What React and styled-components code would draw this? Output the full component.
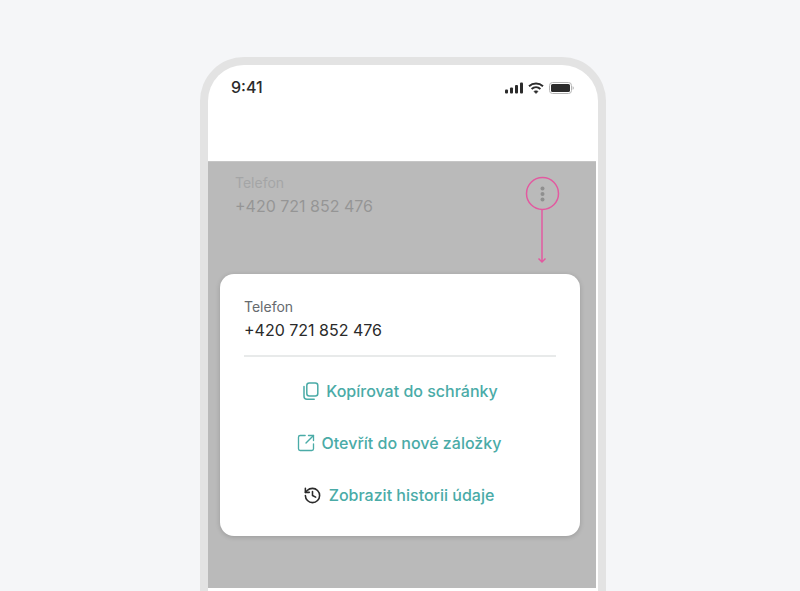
import React from "react";
import styled, { createGlobalStyle } from "styled-components";
import { History, SquareArrowOutUpRight } from "lucide-react";

const GlobalStyle = createGlobalStyle`
  html, body {
    margin: 0;
    height: 100%;
    overflow: hidden;
    background: #f5f6f8;
    font-family: Inter, "Liberation Sans", sans-serif;
  }
`;

const Page = styled.div`
  height: 591px;
  padding: 57px 0 0 200px;
  box-sizing: border-box;
  overflow: hidden;
`;

const Phone = styled.div`
  width: 406px;
  height: 640px;
  box-sizing: border-box;
  border: 8px solid #e3e3e3;
  border-bottom: 0;
  border-radius: 44px 44px 0 0;
  background: #fff;
  overflow: hidden;
`;

const StatusBar = styled.div`
  height: 96px;
  padding: 13px 24px 0 23px;
  box-sizing: border-box;
  display: flex;
  align-items: flex-start;
  justify-content: space-between;
`;

const Time = styled.span`
  font-size: 16px;
  line-height: 19px;
  font-weight: 500;
  color: #2b2b2b;
`;

const StatusIcons = styled.div`
  display: flex;
  align-items: center;
  gap: 5px;
  height: 19px;
`;

const Dimmed = styled.section`
  position: relative;
  width: 388px;
  height: 427px;
  background: #bababa;
  border-top: 1px solid #c6c6c6;
  box-sizing: border-box;
  padding: 12px 0 0 12px;
`;

const FieldRow = styled.div`
  padding-left: 15px;
  height: 100px;
  opacity: ${(p) => p.$faded ? 0.25 : 1};
`;

const Label = styled.div`
  font-size: 14px;
  line-height: 17px;
  color: #666a6e;
`;

const Value = styled.div`
  margin-top: 4px;
  font-size: 16px;
  line-height: 22px;
  color: #2a2a2a;
`;

const Annotation = styled.svg`
  position: absolute;
  left: 316px;
  top: 13px;
`;

const Card = styled.div`
  width: 360px;
  height: 262px;
  box-sizing: border-box;
  padding: 24px 24px 0;
  background: #fff;
  border-radius: 14px;
  box-shadow: 0 1px 5px rgba(0, 0, 0, 0.18);
`;

const Divider = styled.hr`
  margin: 14px 0 8px;
  border: 0;
  height: 2px;
  background: #e8eaea;
`;

const Action = styled.button`
  display: flex;
  align-items: center;
  justify-content: center;
  gap: ${(p) => p.$gap}px;
  width: 100%;
  height: 52px;
  padding: 0 ${(p) => p.$inset || 0}px 0 0;
  border: 0;
  background: none;
  font: 500 16px/20px Inter, "Liberation Sans", sans-serif;
  color: #4aaba7;
  svg {
    flex: none;
    color: ${(p) => p.$iconColor || "#4aaba7"};
  }
`;

const SignalIcon = () => (
  <svg width="18" height="12" viewBox="0 0 18 12" fill="#2b2b2b">
    <rect x="0" y="7.5" width="3" height="4" rx="1" />
    <rect x="5" y="5.5" width="3" height="6" rx="1" />
    <rect x="10" y="3" width="3" height="8.5" rx="1" />
    <rect x="15" y="0.5" width="3" height="11" rx="1" />
  </svg>
);

const WifiIcon = () => (
  <svg width="16" height="12" viewBox="0 0 16 12" fill="none" stroke="#2b2b2b" strokeWidth="2">
    <path d="M1 4.2C5 .6 11 .6 15 4.2" />
    <path d="M3.6 6.9c2.6-2.3 6.2-2.3 8.8 0" />
    <path d="M8 11.6 5.9 9.4c1.2-1 3-1 4.2 0z" fill="#2b2b2b" strokeWidth="0.5" />
  </svg>
);

const BatteryIcon = () => (
  <svg width="25" height="12" viewBox="0 0 25 12">
    <rect x="0.5" y="0.5" width="22" height="11" rx="3" fill="none" stroke="#b4b4b4" />
    <rect x="2" y="2" width="19" height="8" rx="1.6" fill="#2b2b2b" />
    <path d="M23.6 4.2c.8.3 1.2 1 1.2 1.8s-.4 1.500-1.200 1.800z" fill="#b4b4b4" />
  </svg>
);

const CopyIcon = () => (
  <svg width="18" height="18" viewBox="0 0 18 18" fill="none" stroke="currentColor" strokeWidth="1.5" strokeLinecap="round">
    <rect x="4.800" y="1" width="11" height="13" rx="2.500" />
    <path d="M2 4.500v9.700c0 1.700 1.300 3 3 3h7.200" />
  </svg>
);

const actions = [
  { label: "Kopírovat do schránky", icon: <CopyIcon />, gap: 6 },
  { label: "Otevřít do nové záložky", icon: <SquareArrowOutUpRight size={20} strokeWidth={1.6} />, gap: 6, inset: 3 },
  { label: "Zobrazit historii údaje", icon: <History size={19} strokeWidth={2} />, gap: 7, inset: 3, iconColor: "#2b2b2b" },
];

export default function App() {
  return (
    <Page>
      <GlobalStyle />
      <Phone>
        <StatusBar>
          <Time>9:41</Time>
          <StatusIcons>
            <SignalIcon />
            <WifiIcon />
            <BatteryIcon />
          </StatusIcons>
        </StatusBar>
        <Dimmed>
          <FieldRow $faded>
            <Label>Telefon</Label>
            <Value>+420 721 852 476</Value>
          </FieldRow>
          <Annotation width="40" height="92" viewBox="0 0 40 92" fill="none">
            <circle cx="18.500" cy="18.500" r="16" stroke="#e25aa0" strokeWidth="1.500" />
            <circle cx="18.500" cy="13.500" r="2" fill="#8f8f8f" />
            <circle cx="18.500" cy="19" r="2" fill="#8f8f8f" />
            <circle cx="18.500" cy="24.500" r="2" fill="#8f8f8f" />
            <path d="M18 34.500V87M14.500 83.500 18 87l3.500-3.500" stroke="#e25aa0" strokeWidth="1.500" />
          </Annotation>
          <Card>
            <Label>Telefon</Label>
            <Value>+420 721 852 476</Value>
            <Divider />
            {actions.map((a) => (
              <Action key={a.label} $gap={a.gap} $inset={a.inset} $iconColor={a.iconColor}>
                {a.icon}
                {a.label}
              </Action>
            ))}
          </Card>
        </Dimmed>
      </Phone>
    </Page>
  );
}
